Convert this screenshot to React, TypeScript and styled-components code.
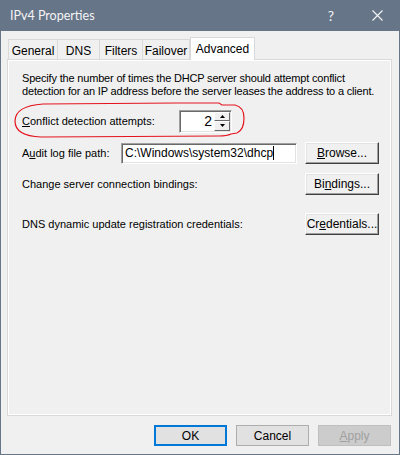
import React from "react";
import styled, { createGlobalStyle } from "styled-components";

const GlobalStyle = createGlobalStyle`
    html, body {
        margin: 0;
        padding: 0;
        background: #f0f0f0;
    }
    * {
        box-sizing: border-box;
    }
`;

const Window = styled.div`
    position: relative;
    width: 400px;
    height: 455px;
    display: flex;
    flex-direction: column;
    background: #f0f0f0;
    border: 1px solid #677589;
    border-top: none;
    font-family: "Liberation Sans", Arial, sans-serif;
    font-size: 11px;
    color: #000;
`;

const TitleBar = styled.div`
    height: 31px;
    margin: 0 -1px;
    padding: 0 0 0 10px;
    display: flex;
    align-items: center;
    background: #677589;
    color: #f4f4f4;
    font-family: "Segoe UI", Lato, "Liberation Sans", sans-serif;
    font-size: 12.5px;
`;

const Title = styled.div`
    flex: 1;
    padding-bottom: 1px;
`;

const TitleButton = styled.div<{ $w: number }>`
    width: ${(p) => p.$w}px;
    height: 31px;
    display: flex;
    align-items: center;
    justify-content: center;
    font-size: 14px;
`;

const Body = styled.div`
    flex: 1;
    display: flex;
    flex-direction: column;
    padding: 6px 7px 0 6px;
`;

const TabStrip = styled.div`
    height: 22px;
    display: flex;
    align-items: flex-end;
    padding-left: 1px;
`;

const Tab = styled.div<{ $active?: boolean; $w: number }>`
    width: ${(p) => p.$w}px;
    height: ${(p) => (p.$active ? 23 : 20)}px;
    margin-bottom: ${(p) => (p.$active ? -1 : 0)}px;
    display: flex;
    justify-content: center;
    padding-top: 4px;
    border: 1px solid #d9d9d9;
    border-bottom: none;
    border-left: ${(p) => (p.$active ? "1px solid #d9d9d9" : "none")};
    background: ${(p) => (p.$active ? "#ffffff" : "#f0f0f0")};
    font-size: 12px;
    position: relative;
    z-index: ${(p) => (p.$active ? 1 : 0)};

    &:first-child {
        border-left: 1px solid #d9d9d9;
    }
`;

const Panel = styled.div`
    height: 357px;
    border: 1px solid #d9d9d9;
    background: #f0f0f0;
    box-shadow: inset 1px 1px 0 #ffffff, inset -1px -1px 0 #ffffff;
    padding: 12px 12px 0 14px;
    display: flex;
    flex-direction: column;
`;

const Para = styled.p`
    margin: 0;
    line-height: 13px;
    white-space: nowrap;
    letter-spacing: -0.18px;
`;

const Row = styled.div<{ $top: number }>`
    margin-top: ${(p) => p.$top}px;
    height: 22px;
    display: flex;
    align-items: center;
`;

const Label = styled.span<{ $w?: number }>`
    width: ${(p) => (p.$w ? `${p.$w}px` : "auto")};
    flex: ${(p) => (p.$w ? "none" : "1")};
    white-space: nowrap;
`;

const Key = styled.span`
    text-decoration: underline;
    text-underline-offset: 1px;
`;

const Sunken = styled.div<{ $w: number; $h: number }>`
    width: ${(p) => p.$w}px;
    height: ${(p) => p.$h}px;
    background: #fff;
    border: 1px solid;
    border-color: #a0a0a0 #ffffff #ffffff #a0a0a0;
    box-shadow: inset 1px 1px 0 #696969, inset -1px -1px 0 #e3e3e3;
    display: flex;
    align-items: center;
    font-size: 12px;
`;

const SpinText = styled.div`
    flex: 1;
    text-align: right;
    padding-right: 2px;
    font-size: 14px;
`;

const SpinButtons = styled.div`
    width: 17px;
    height: 100%;
    padding: 1px 1px 1px 0;
    display: flex;
    flex-direction: column;
`;

const SpinButton = styled.div`
    flex: 1;
    background: #f0f0f0;
    border: 1px solid;
    border-color: #ffffff #696969 #696969 #ffffff;
    display: flex;
    align-items: center;
    justify-content: center;
`;

const InputText = styled.div`
    padding-left: 3px;
    display: flex;
    align-items: center;
`;

const Caret = styled.span`
    display: inline-block;
    width: 1px;
    height: 14px;
    background: #000;
`;

const ClassicButton = styled.div`
    width: 74px;
    height: 22px;
    margin-left: auto;
    display: flex;
    align-items: center;
    justify-content: center;
    background: #f0f0f0;
    border: 1px solid;
    border-color: #ffffff #404040 #404040 #ffffff;
    box-shadow: inset -1px -1px 0 #a0a0a0, inset 1px 1px 0 #e3e3e3;
    font-size: 12px;
`;

const Footer = styled.div`
    flex: 1;
    display: flex;
    justify-content: flex-end;
    align-items: flex-start;
    gap: 9px;
    padding: 9px 1px 0 0;
`;

const DialogButton = styled.div<{ $variant?: "default" | "disabled" }>`
    width: 73px;
    height: 21px;
    display: flex;
    align-items: center;
    justify-content: center;
    font-size: 12px;
    background: ${(p) => (p.$variant === "disabled" ? "#cccccc" : "#e1e1e1")};
    color: ${(p) => (p.$variant === "disabled" ? "#a0a0a0" : "#000")};
    border: ${(p) =>
        p.$variant === "default"
            ? "2px solid #0078d7"
            : p.$variant === "disabled"
              ? "1px solid #bfbfbf"
              : "1px solid #adadad"};
`;

const Annotation = styled.svg`
    position: absolute;
    left: 0;
    top: 0;
    pointer-events: none;
`;

const Arrow = ({ up }: { up?: boolean }) => (
    <svg width="5" height="3" viewBox="0 0 5 3">
        <path d={up ? "M2.5 0 L5 3 L0 3 Z" : "M0 0 L5 0 L2.5 3 Z"} fill="#000" />
    </svg>
);

const App = () => {
    return (
        <>
            <GlobalStyle />
            <Window>
                <TitleBar>
                    <Title>IPv4 Properties</Title>
                    <TitleButton $w={46}>?</TitleButton>
                    <TitleButton $w={46}>
                        <svg width="11" height="11" viewBox="0 0 11 11">
                            <path d="M0.5 0.5 L10.5 10.5 M10.5 0.5 L0.5 10.5" stroke="#f4f4f4" strokeWidth="1.1" />
                        </svg>
                    </TitleButton>
                </TitleBar>
                <Body>
                    <TabStrip>
                        <Tab $w={50}>General</Tab>
                        <Tab $w={42}>DNS</Tab>
                        <Tab $w={43}>Filters</Tab>
                        <Tab $w={47}>Failover</Tab>
                        <Tab $w={65} $active>
                            Advanced
                        </Tab>
                    </TabStrip>
                    <Panel>
                        <Para>
                            Specify the number of times the DHCP server should attempt conflict
                            <br />
                            detection for an IP address before the server leases the address to a client.
                        </Para>
                        <Row $top={12}>
                            <Label $w={157}>
                                <Key>C</Key>onflict detection attempts:
                            </Label>
                            <Sunken $w={53} $h={23}>
                                <SpinText>2</SpinText>
                                <SpinButtons>
                                    <SpinButton>
                                        <Arrow up />
                                    </SpinButton>
                                    <SpinButton>
                                        <Arrow />
                                    </SpinButton>
                                </SpinButtons>
                            </Sunken>
                        </Row>
                        <Row $top={10}>
                            <Label $w={99}>
                                A<Key>u</Key>dit log file path:
                            </Label>
                            <Sunken $w={176} $h={21}>
                                <InputText>
                                    C:\Windows\system32\dhcp
                                    <Caret />
                                </InputText>
                            </Sunken>
                            <ClassicButton>
                                <Key>B</Key>rowse...
                            </ClassicButton>
                        </Row>
                        <Row $top={9}>
                            <Label>Change server connection bindings:</Label>
                            <ClassicButton>
                                Bi<Key>n</Key>dings...
                            </ClassicButton>
                        </Row>
                        <Row $top={18}>
                            <Label>DNS dynamic update registration credentials:</Label>
                            <ClassicButton>
                                Cr<Key>e</Key>dentials...
                            </ClassicButton>
                        </Row>
                    </Panel>
                    <Footer>
                        <DialogButton $variant="default">OK</DialogButton>
                        <DialogButton>Cancel</DialogButton>
                        <DialogButton $variant="disabled">
                            <Key>A</Key>pply
                        </DialogButton>
                    </Footer>
                </Body>
                <Annotation width="400" height="455" viewBox="0 0 400 455">
                    <path
                        d="M42 104 L176 103 L218 103 L221 105 L234 105 Q243 107 243 118 Q243 130 236 133 L230 134 Q226 136 218 136 L40 137 Q14 136 14 121 Q14 106 42 104 Z"
                        fill="none"
                        stroke="#e4141e"
                        strokeWidth="1.2"
                    />
                </Annotation>
            </Window>
        </>
    );
};

export default App;
